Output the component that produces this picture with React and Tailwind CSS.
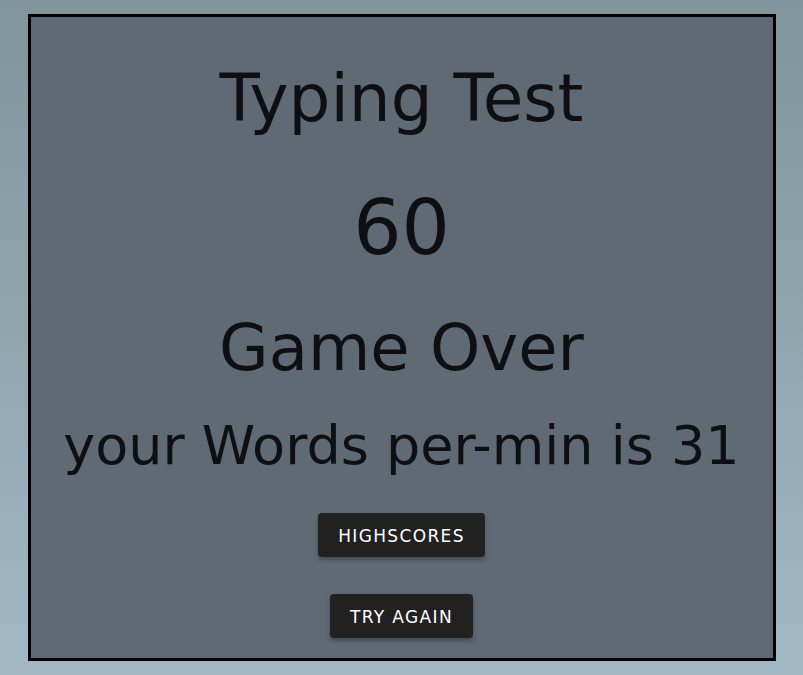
import React from 'react';

function App() {
  const font = { fontFamily: '"DejaVu Sans", Verdana, sans-serif' };

  return (
    <div
      className="min-h-[675px] w-full bg-gradient-to-b from-[#7f949b] to-[#a2b8c4] pt-[14px]"
      style={font}
    >
      <div className="mx-auto flex h-[647px] w-[748px] flex-col items-center border-[3px] border-black bg-[#606a74] text-[#0e0f12]">
        <h1 className="mt-[49px] text-[66px] leading-none font-normal">Typing Test</h1>
        <div className="mt-[58px] text-[76px] leading-none">60</div>
        <h2 className="mt-[50px] text-[64px] leading-none font-normal">Game Over</h2>
        <p className="mt-[39px] text-[54px] leading-none whitespace-nowrap">your Words per-min is 31</p>

        <button className="mt-[40px] h-[44px] rounded-[4px] bg-[#212121] px-5 pt-[3px] text-[17px] tracking-[0.08em] text-white shadow-[0_3px_4px_rgba(0,0,0,0.3)]">
          HIGHSCORES
        </button>
        <button className="mt-[37px] h-[44px] rounded-[4px] bg-[#212121] px-5 pt-[3px] text-[17px] tracking-[0.08em] text-white shadow-[0_3px_4px_rgba(0,0,0,0.3)]">
          TRY AGAIN
        </button>
      </div>
    </div>
  );
}

export default App;
